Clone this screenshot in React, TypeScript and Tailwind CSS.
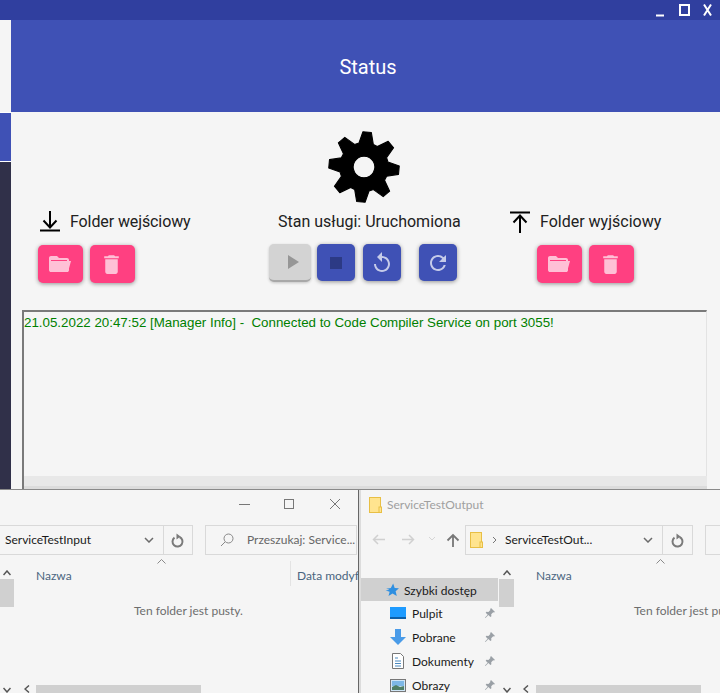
import React from "react";

const Folder = () => (
  <svg width="24" height="24" viewBox="0 0 24 24" fill="#ffc0d6" className="-ml-[3px]"><path d="M20 6h-8l-2-2H4c-1.100 0-2 .9-2 2v12c0 1.100.9 2 2 2h16c1.100 0 2-.9 2-2V8c0-1.100-.9-2-2-2zm0 12H4V8h16v10z" /><path d="M4 9h20l-3 11H3z" /></svg>
);
const Trash = () => (
  <svg width="25" height="25" viewBox="0 0 24 24" fill="#ffc0d6" className="-ml-[2px]"><path d="M6 19c0 1.100.9 2 2 2h8c1.100 0 2-.9 2-2V7H6v12zM19 4h-3.500l-1-1h-5l-1 1H5v2h14V4z" /></svg>
);
const Pink = ({ children }: { children: React.ReactNode }) => (
  <button className="w-[45px] h-[38px] rounded-[5px] bg-[#ff4081] flex items-center justify-center shadow-[0_1px_4px_rgba(0,0,0,0.4)]">{children}</button>
);
const Blue = ({ children, className = "" }: { children: React.ReactNode; className?: string }) => (
  <button className={`w-[38px] h-[37px] rounded-[5px] bg-[#3f51b5] flex items-center justify-center shadow-[0_1px_4px_rgba(0,0,0,0.4)] ${className}`}>{children}</button>
);
const Pin = () => (
  <svg width="12" height="12" viewBox="0 0 12 12" fill="#9aa0a6"><path d="M7 1l4 4-1 .6-.8-.3-2 2 .2 2-1 .7-2-2L1.500 11 1 10.500 3.700 7.800l-2-2 .7-1 2 .2 2-2-.3-.8z" /></svg>
);
const Chevron = () => (
  <svg width="10" height="6" viewBox="0 0 10 6" fill="none" stroke="#6b6b6b" strokeWidth="1.500"><path d="M1 1l4 4 4-4" /></svg>
);
const Refresh = () => (
  <svg width="14" height="15" viewBox="0 0 14 15" fill="none" stroke="#7a7a7a" strokeWidth="2"><path d="M8.500 4A5 5 0 1 1 3.500 4.600" /><path d="M5.500 0.500v6l4-3z" fill="#7a7a7a" stroke="none" /></svg>
);
const FolderSmall = () => (
  <svg width="13" height="16" viewBox="0 0 13 16"><rect x=".5" y=".5" width="11" height="15" fill="#ffe48f" stroke="#e8bf45" /><rect x="10" y="10" width="2.500" height="5.500" fill="#ffe48f" stroke="#e8bf45" /></svg>
);
const Caret = () => (
  <svg width="9" height="5" viewBox="0 0 9 5" fill="none" stroke="#8a8a8a"><path d="M.5 4.500l4-4 4 4" /></svg>
);
const ScrollUp = () => (
  <svg width="8" height="6" viewBox="0 0 8 6" fill="none" stroke="#555" strokeWidth="1.500"><path d="M.5 5l3.500-4 3.500 4" /></svg>
);
const ScrollLeft = () => (
  <svg width="6" height="8" viewBox="0 0 6 8" fill="none" stroke="#555" strokeWidth="1.500"><path d="M5 .5L1 4l4 3.500" /></svg>
);
const ScrollDown = () => (
  <svg width="8" height="6" viewBox="0 0 8 6" fill="none" stroke="#555" strokeWidth="1.500"><path d="M.5 1l3.500 4 3.500-4" /></svg>
);

const gear = (() => {
  const cx = 50, cy = 50, n = 8, R = 49, r = 34;
  const pts: string[] = [];
  for (let i = 0; i < n; i++) {
    const a = (i * 2 * Math.PI) / n - Math.PI / 2 + 0.09;
    const w1 = 0.3, w2 = 0.12;
    [[r, -w1], [R, -w2], [R, w2], [r, w1]].forEach(([rad, d]) => {
      pts.push(`${(cx + rad * Math.cos(a + d)).toFixed(2)},${(cy + rad * Math.sin(a + d)).toFixed(2)}`);
    });
  }
  return pts.join(" ");
})();

const Panel = ({ children }: { children: React.ReactNode }) => (
  <div className="relative h-full bg-[#f5f5f5] overflow-hidden">{children}</div>
);

export default function App() {
  return (
    <div className="w-[720px] h-[693px] overflow-hidden flex flex-col bg-[#f5f5f5] text-[#212121] font-['Roboto','Liberation_Sans',sans-serif]">
      <div className="h-5 shrink-0 bg-[#303f9f] flex items-center justify-end">
        <svg width="66" height="20" viewBox="0 0 66 20" fill="none" stroke="#fff" strokeWidth="2">
          <path d="M2 15.500h8" />
          <rect x="26" y="5" width="9" height="10" />
          <path d="M50 4.500l7 11M57 4.500l-7 11" />
        </svg>
      </div>
      <div className="h-[469px] shrink-0 flex">
        <div className="w-[11px] shrink-0 flex flex-col">
          <div className="h-[92px] bg-[#f5f5f5]" />
          <div className="h-px bg-white" />
          <div className="h-[48px] bg-[#3f51b5]" />
          <div className="h-px bg-white" />
          <div className="flex-1 bg-[#303049]" />
        </div>
        <div className="flex-1 min-w-0 flex flex-col">
          <div className="h-[92px] shrink-0 bg-[#3f51b5] flex items-center justify-center text-white text-[20px] pl-[5px] pt-[2px]">Status</div>
          <div className="flex flex-col items-center pt-[19px] pr-[3px]">
            <svg width="72" height="72" viewBox="0 0 100 100">
              <path fillRule="evenodd" strokeLinejoin="round" stroke="#000" strokeWidth="1.500" d={`M${gear.split(" ").join(" L")} Z M50 35 a15 15 0 1 0 .01 0 Z`} fill="#000" />
            </svg>
          </div>
          <div className="flex mt-[6px] pl-[11px]">
            <div className="w-[230px]">
              <div className="flex items-center gap-[10px] pl-[18px] h-[25px]">
                <svg width="20" height="22" viewBox="0 0 20 22" fill="none" stroke="#000" strokeWidth="2"><path d="M10 0v17M3.500 9.500l6.500 7 6.500-7" /><path d="M0 19.500h20" /></svg>
                <span className="text-[16px] tracking-[-0.1px]">Folder wejściowy</span>
              </div>
              <div className="flex gap-[7px] mt-[11px] pl-[16px]">
                <Pink><Folder /></Pink>
                <Pink><Trash /></Pink>
              </div>
            </div>
            <div className="w-[230px]">
              <div className="h-[25px] flex items-center pl-[26px] text-[16px]">Stan usługi: Uruchomiona</div>
              <div className="flex mt-[10px] pl-[17px] items-start">
                <button className="w-[42px] h-[38px] rounded-[5px] bg-[#d3d3d3] flex items-center justify-center border-b-2 border-[#a8a8a8] shadow-[0_1px_3px_rgba(0,0,0,0.2)] mr-[6px]">
                  <svg width="24" height="24" viewBox="0 0 24 24" fill="#969696" className="ml-[3px]"><path d="M8 5v14l11-7z" /></svg>
                </button>
                <Blue className="mr-[8px]"><svg width="24" height="24" viewBox="0 0 24 24" fill="#2c3a85"><rect x="6" y="6" width="12" height="12" /></svg></Blue>
                <Blue className="mr-[18px]"><svg width="24" height="24" viewBox="0 0 24 24" fill="#c5cbe9"><path d="M12 5V1L7 6l5 5V7c3.310 0 6 2.690 6 6s-2.690 6-6 6-6-2.690-6-6H4c0 4.420 3.580 8 8 8s8-3.580 8-8-3.580-8-8-8z" /></svg></Blue>
                <Blue><svg width="24" height="24" viewBox="0 0 24 24" fill="#c5cbe9"><path d="M17.650 6.350A7.958 7.958 0 0 0 12 4c-4.420 0-7.990 3.580-7.990 8s3.570 8 7.990 8c3.730 0 6.840-2.550 7.730-6h-2.080A5.990 5.990 0 0 1 12 18c-3.310 0-6-2.690-6-6s2.690-6 6-6c1.660 0 3.140.69 4.220 1.780L13 11h7V4l-2.350 2.350z" /></svg></Blue>
              </div>
            </div>
            <div className="flex-1">
              <div className="flex items-center gap-[10px] pl-[28px] h-[25px]">
                <svg width="20" height="22" viewBox="0 0 20 22" fill="none" stroke="#000" strokeWidth="2"><path d="M0 1.500h20" /><path d="M10 22V5M3.500 11.500l6.500-7 6.500 7" /></svg>
                <span className="text-[16px]">Folder wyjściowy</span>
              </div>
              <div className="flex gap-[7px] mt-[11px] pl-[55px]">
                <Pink><Folder /></Pink>
                <Pink><Trash /></Pink>
              </div>
            </div>
          </div>
          <div className="flex-1 mt-[27px] ml-[11px] mr-[13px] border-t-2 border-l-2 border-r border-t-[#7a7a7a] border-l-[#7a7a7a] border-r-[#e3e3e3] relative">
            <div className="text-[13.33px] leading-[20px] pt-[1px] text-[#008000] whitespace-pre font-['Liberation_Sans',sans-serif]">21.05.2022 20:47:52 [Manager Info] -  Connected to Code Compiler Service on port 3055!</div>
            <div className="absolute left-0 -right-[1px] bottom-[3px] h-[10px] bg-[#e8e8e8]" />
            <div className="absolute left-0 -right-[1px] bottom-0 h-[3px] bg-[#dcdcdc]" />
          </div>
        </div>
      </div>
      <div className="flex-1 min-h-0 flex border-t border-t-[#8a8a8a] text-[12px] font-['Lato','Noto_Sans',sans-serif] text-[#1a1a1a]">
        <div className="w-[359px] shrink-0 border-r border-r-[#666]">
          <Panel>
            <svg width="358" height="40" viewBox="0 0 358 40" fill="none" stroke="#777" className="absolute left-0 top-0">
              <path d="M239 14.500h11" />
              <rect x="284.500" y="9.500" width="9" height="9" />
              <path d="M330 9l10 10M340 9l-10 10" />
            </svg>
            <div className="flex items-center h-[30px] mt-[35px]">
              <div className="w-[163px] shrink-0 h-[30px] border border-l-0 border-r-0 border-[#d9d9d9] flex items-center pl-[5px] justify-between">
                <span>ServiceTestInput</span>
                <span className="pr-[9px]"><Chevron /></span>
              </div>
              <div className="w-[30px] shrink-0 h-[30px] border border-[#d9d9d9] flex items-center justify-center"><Refresh /></div>
              <div className="ml-[12px] w-[152px] shrink-0 h-[30px] border border-[#d9d9d9] flex items-center text-[#666]">
                <svg width="14" height="14" viewBox="0 0 14 14" fill="none" stroke="#888" className="ml-[14px] shrink-0"><circle cx="8.500" cy="5.500" r="4.500" /><path d="M5 9l-4 4" /></svg>
                <span className="ml-[13px] whitespace-nowrap">Przeszukaj: Service...</span>
              </div>
            </div>
            <div className="absolute left-[3px] top-[80px]"><ScrollUp /></div>
            <div className="absolute left-0 top-[89px] w-[14px] h-[28px] bg-[#d0d0d0]" />
            <div className="absolute left-[157px] top-[69px]"><Caret /></div>
            <div className="absolute left-[36px] top-[77px] text-[#4a6580]">Nazwa</div>
            <div className="absolute left-[290px] top-[71px] h-[25px] border-l border-[#e3e3e3]" />
            <div className="absolute left-[297px] top-[77px] whitespace-nowrap text-[#4a6580]">Data modyfikacji</div>
            <div className="absolute left-[134px] top-[112px] text-[#6d6d6d] whitespace-nowrap">Ten folder jest pusty.</div>
            <div className="absolute left-[3px] top-[197px]"><ScrollDown /></div>
            <div className="absolute left-[24px] top-[195px]"><ScrollLeft /></div>
            <div className="absolute left-[36px] top-[195px] w-[165px] h-[8px] bg-[#d0d0d0]" />
          </Panel>
        </div>
        <div className="w-[2px] shrink-0 bg-[#dcdcdc]" />
        <div className="flex-1 min-w-0">
          <Panel>
            <div className="absolute left-[8px] top-[6px] flex items-center gap-[5px] text-[#a0a0a0] whitespace-nowrap">
              <FolderSmall /><span>ServiceTestOutput</span>
            </div>
            <svg width="13" height="11" viewBox="0 0 13 11" fill="none" stroke="#d0d0d0" strokeWidth="1.500" className="absolute left-[11px] top-[44px]"><path d="M13 5.500H1.500M6 1L1.500 5.500 6 10" /></svg>
            <svg width="13" height="11" viewBox="0 0 13 11" fill="none" stroke="#d0d0d0" strokeWidth="1.500" className="absolute left-[41px] top-[44px]"><path d="M0 5.500h11.500M7 1l4.500 4.500L7 10" /></svg>
            <svg width="8" height="5" viewBox="0 0 8 5" fill="none" stroke="#d5d5d5" className="absolute left-[67px] top-[46px]"><path d="M1 1l3 3 3-3" /></svg>
            <svg width="14" height="14" viewBox="0 0 14 14" fill="none" stroke="#777" strokeWidth="1.800" className="absolute left-[85px] top-[43px]"><path d="M7 14V2M1.500 7.500L7 2l5.500 5.500" /></svg>
            <div className="absolute left-[104px] top-[35px] w-[228px] h-[30px] border border-[#d9d9d9] flex items-center">
              <span className="ml-[4px]"><FolderSmall /></span>
              <svg width="5" height="8" viewBox="0 0 5 8" fill="none" stroke="#777" className="ml-[9px]"><path d="M1 1l3 3-3 3" /></svg>
              <span className="ml-[8px] flex-1">ServiceTestOut...</span>
              <span className="pr-[9px] pb-[1px]"><Chevron /></span>
              <div className="w-[30px] h-full border-l border-[#d9d9d9] flex items-center justify-center"><Refresh /></div>
            </div>
            <div className="absolute left-[344px] top-[35px] w-[20px] h-[30px] border border-[#d9d9d9]" />
            <div className="absolute left-0 top-[88px] w-[137px] h-[23px] bg-[#d0d0d0] flex items-center pl-[24px] gap-[5px]">
              <svg width="14" height="14" viewBox="0 0 24 24" fill="#2f8fe0"><path d="M14 1l2.600 7.600 7.400.6-5.800 5 2 8L13 18l-7 4.200L8 15 1 13l5-1 1-1-5-1 8-1.500z" /></svg>
              <span className="pt-[2px]">Szybki dostęp</span>
            </div>
            <div className="absolute left-[142px] top-[80px]"><ScrollUp /></div>
            <div className="absolute left-[138px] top-[89px] w-[15px] h-[28px] bg-[#d0d0d0]" />
            {[
              { t: "Pulpit", y: 112, icon: <span className="block w-[16px] h-[12px] bg-[#1e9bff] border-b-2 border-[#0d5fa8]" /> },
              { t: "Pobrane", y: 136, icon: <svg width="16" height="16" viewBox="0 0 16 16" fill="#4a9be8"><path d="M5 0h6v8h5l-8 8-8-8h5z" /></svg> },
              { t: "Dokumenty", y: 160, icon: <svg width="12" height="16" viewBox="0 0 12 16" fill="#fff" stroke="#777"><path d="M.5.500h8l3 3v12H.5z" /><path d="M3 5h3M3 8h6M3 10.500h6M3 13h6" stroke="#4a8ac0" /></svg> },
              { t: "Obrazy", y: 184, icon: <svg width="16" height="13" viewBox="0 0 16 13"><rect x=".5" y=".5" width="15" height="12" fill="#cfe6f7" stroke="#777" /><rect x="2" y="2" width="12" height="5" fill="#7db8e6" /><path d="M2 11V8l4-2 4 2 4-1v4z" fill="#4f7f66" /></svg> },
            ].map((r) => (
              <div key={r.t} className="absolute left-[29px] w-[106px] h-[24px] flex items-center" style={{ top: r.y - 1 }}>
                <span className="w-[16px] flex justify-center">{r.icon}</span>
                <span className="ml-[6px] flex-1 pt-[2px]">{r.t}</span>
                <Pin />
              </div>
            ))}
            <div className="absolute left-[295px] top-[69px]"><Caret /></div>
            <div className="absolute left-[175px] top-[77px] text-[#4a6580]">Nazwa</div>
            <div className="absolute left-[273px] top-[112px] text-[#6d6d6d] whitespace-nowrap">Ten folder jest pusty.</div>
            <div className="absolute left-[142px] top-[197px]"><ScrollDown /></div>
            <div className="absolute left-[162px] top-[195px]"><ScrollLeft /></div>
            <div className="absolute left-[175px] top-[195px] w-[165px] h-[8px] bg-[#d0d0d0]" />
          </Panel>
        </div>
      </div>
    </div>
  );
}
